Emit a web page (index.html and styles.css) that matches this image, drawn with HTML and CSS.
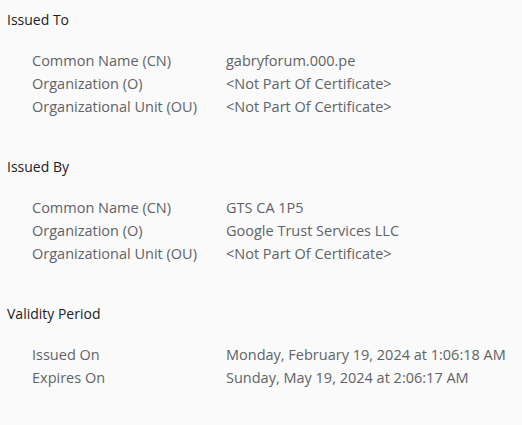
FILE: index.html
```html
<!DOCTYPE html>
<html>
<head>
<meta charset="utf-8">
<link rel="stylesheet" href="styles.css">
</head>
<body>
<div class="viewer">
  <section class="group">
    <h2 class="group-title">Issued To</h2>
    <div class="rows">
      <div class="label">Common Name (CN)</div><div class="value">gabryforum.000.pe</div>
      <div class="label">Organization (O)</div><div class="value">&lt;Not Part Of Certificate&gt;</div>
      <div class="label">Organizational Unit (OU)</div><div class="value">&lt;Not Part Of Certificate&gt;</div>
    </div>
  </section>
  <section class="group">
    <h2 class="group-title">Issued By</h2>
    <div class="rows">
      <div class="label">Common Name (CN)</div><div class="value">GTS CA 1P5</div>
      <div class="label">Organization (O)</div><div class="value">Google Trust Services LLC</div>
      <div class="label">Organizational Unit (OU)</div><div class="value">&lt;Not Part Of Certificate&gt;</div>
    </div>
  </section>
  <section class="group">
    <h2 class="group-title">Validity Period</h2>
    <div class="rows">
      <div class="label">Issued On</div><div class="value">Monday, February 19, 2024 at 1:06:18 AM</div>
      <div class="label">Expires On</div><div class="value">Sunday, May 19, 2024 at 2:06:17 AM</div>
    </div>
  </section>
</div>
</body>
</html>
```
FILE: styles.css
```css
html, body {
  margin: 0;
  padding: 0;
  background: #fafafa;
}
body {
  font-family: "Open Sans", "Noto Sans", sans-serif;
  font-size: 14px;
  color: #5f6368;
}
.viewer {
  padding-top: 8px;
  display: flex;
  flex-direction: column;
  gap: 37px;
}
.group-title {
  margin: 0 0 18px 0;
  padding-left: 7px;
  font-size: 14px;
  font-weight: normal;
  line-height: 23px;
  color: #202124;
}
.rows {
  display: grid;
  grid-template-columns: 194px 1fr;
  padding-left: 32px;
  font-size: 14.5px;
  line-height: 23px;
}
.label, .value {
  white-space: nowrap;
}
```
